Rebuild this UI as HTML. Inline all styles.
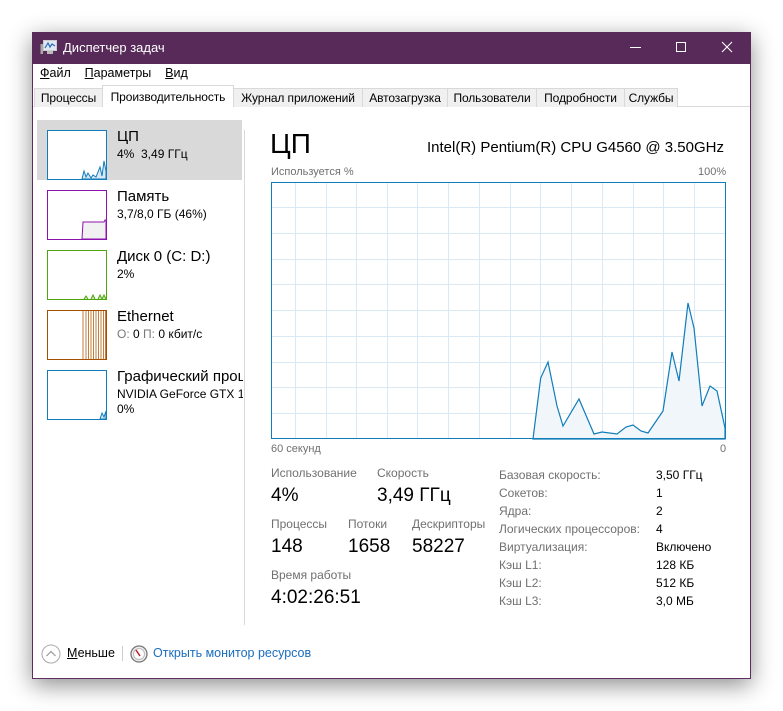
<!DOCTYPE html>
<html><head><meta charset="utf-8"><style>
*{margin:0;padding:0;box-sizing:border-box}
body{width:783px;height:711px;background:#fff;font-family:"Liberation Sans","DejaVu Sans",sans-serif;position:relative;overflow:hidden;color:#000}
.a{position:absolute;white-space:nowrap}
#win{position:absolute;left:32px;top:32px;width:719px;height:647px;border:1px solid #5c2d5e;background:#fff;box-shadow:0 6px 22px rgba(0,0,0,.45)}
.tab{position:absolute;top:88px;height:19px;border:1px solid #d9d9d9;border-bottom:none;background:#f0f0f0;font-size:12px;line-height:18px;text-align:center;letter-spacing:-0.1px}
.lbl{font-size:12px;color:#707070}
.big{font-size:19px;color:#000}
.k{font-size:12px;color:#707070}
.v{font-size:12px;color:#000}
.th{position:absolute;left:47px;width:60px;height:50px;background:#fff}
</style></head><body>
<div id="win"></div>
<div class="a" style="left:32px;top:32px;width:719px;height:32px;background:#582a5a"></div>
<svg class="a" style="left:40px;top:39px" width="18" height="17" viewBox="0 0 18 17"><rect x="0.5" y="5" width="2.5" height="10" fill="#aaa"/><rect x="3.5" y="1.5" width="13" height="10" fill="#dfe9f3" stroke="#ccc"/><polyline points="5,9 8,4 10,8 12,5 15,7" fill="none" stroke="#2a6ab5" stroke-width="1.2"/><rect x="7" y="12" width="6" height="3" fill="#bbb"/></svg>
<div class="a" style="left:63px;top:40px;font-size:13px;color:#fff">Диспетчер задач</div>
<div class="a" style="left:630px;top:47px;width:11px;height:1px;background:#fff"></div>
<div class="a" style="left:676px;top:42px;width:10px;height:10px;border:1px solid #fff"></div>
<svg class="a" style="left:721px;top:41px" width="12" height="12"><path d="M1 1L11 11M11 1L1 11" stroke="#fff" stroke-width="1.1"/></svg>
<div class="a" style="left:40px;top:66px;font-size:12.5px"><u>Ф</u>айл&nbsp;&nbsp;&nbsp;&nbsp;<u>П</u>араметры&nbsp;&nbsp;&nbsp;&nbsp;<u>В</u>ид</div>
<div class="a" style="left:33px;top:106px;width:717px;height:1px;background:#d9d9d9"></div>
<div class="tab" style="left:34px;width:69px">Процессы</div>
<div class="tab" style="left:102px;top:85px;height:22px;width:132px;background:#fff;line-height:22px">Производительность</div>
<div class="tab" style="left:233px;width:130px">Журнал приложений</div>
<div class="tab" style="left:362px;width:86px">Автозагрузка</div>
<div class="tab" style="left:447px;width:90px">Пользователи</div>
<div class="tab" style="left:536px;width:89px">Подробности</div>
<div class="tab" style="left:624px;width:54px">Службы</div>

<div class="a" style="left:37px;top:120px;width:205px;height:60px;background:#d9d9d9"></div>
<div class="a" style="left:244px;top:130px;width:1px;height:495px;background:#d9d9d9"></div>

<div class="th" style="top:130px;border:1px solid #117dbb"><svg width="58" height="48"><path d="M34 48L36 40L38 46L40 42L43 47L45 44L48 46L52 36L54 45L56 30L58 40L58 48Z" fill="#dbe8f3" stroke="#117dbb"/></svg></div>
<div class="a" style="left:117px;top:128px;font-size:15px">ЦП</div>
<div class="a" style="left:117px;top:147px;font-size:12px">4%&nbsp; 3,49 ГГц</div>

<div class="th" style="top:190px;border:1px solid #8b12ae"><svg width="58" height="48"><path d="M34 48L35 31L56 31L57 29L58 29L58 48Z" fill="#f1f1f1" stroke="#8b12ae"/></svg></div>
<div class="a" style="left:117px;top:188px;font-size:15px">Память</div>
<div class="a" style="left:117px;top:207px;font-size:12px">3,7/8,0 ГБ (46%)</div>

<div class="th" style="top:250px;border:1px solid #4da60c"><svg width="58" height="48"><path d="M36 48L38 45L40 48M43 48L45 44L47 48M50 48L52 44L54 48L56 44L58 48" fill="#cde6b8" stroke="#4da60c"/></svg></div>
<div class="a" style="left:117px;top:248px;font-size:15px">Диск 0 (C: D:)</div>
<div class="a" style="left:117px;top:267px;font-size:12px">2%</div>

<div class="th" style="top:310px;border:1px solid #a74f01"><svg width="58" height="48"><g stroke="#b35f0f" stroke-width="0.8"><path d="M35 0V48M38 0V48M40.5 0V48M43 0V48M45.5 0V48M48 0V48M50.5 0V48M53 0V48M55.5 0V48M57.5 0V48"/></g></svg></div>
<div class="a" style="left:117px;top:308px;font-size:15px">Ethernet</div>
<div class="a" style="left:117px;top:327px;font-size:12px"><span style="color:#777">О:</span> 0 <span style="color:#777">П:</span> 0 кбит/с</div>

<div class="th" style="top:370px;border:1px solid #117dbb"><svg width="58" height="48"><path d="M52 48L54 42L56 46L58 40L58 48Z" fill="#dbe8f3" stroke="#117dbb"/></svg></div>
<div class="a" style="left:117px;top:368px;font-size:15px;width:126px;overflow:hidden">Графический процессор</div>
<div class="a" style="left:117px;top:387px;font-size:12px;width:126px;overflow:hidden">NVIDIA GeForce GTX 1050</div>
<div class="a" style="left:117px;top:402px;font-size:12px">0%</div>

<div class="a" style="left:270px;top:128px;font-size:28px">ЦП</div>
<div class="a" style="left:427px;top:139px;font-size:15px">Intel(R) Pentium(R) CPU G4560 @ 3.50GHz</div>
<div class="a lbl" style="left:271px;top:166px;font-size:11px">Используется %</div>
<div class="a lbl" style="left:698px;top:166px;font-size:11px">100%</div>
<svg class="a" style="left:271px;top:182px" width="456" height="258" viewBox="271 182 456 258">
<g stroke="#d9eaf4" stroke-width="1">
<path d="M295.5 182V439M326.5 182V439M356.5 182V439M387.5 182V439M417.5 182V439M448.5 182V439M479.5 182V439M510.5 182V439M540.5 182V439M571.5 182V439M602.5 182V439M633.5 182V439M663.5 182V439M694.5 182V439"/>
<path d="M271 207.5H726M271 233.5H726M271 259.5H726M271 284.5H726M271 310.5H726M271 336.5H726M271 362.5H726M271 387.5H726M271 413.5H726"/>
</g>
<path d="M533 439L540.7 378L548 362L557 406L563 426L579 399L594 434L602 432L617 434L626 427L633 425L641 431L648 433L663 411L672 352L679 381L688 303L694 328L702 406L710 386L717 391L725 428L725 439Z" fill="#f1f6fa" stroke="#117dbb" stroke-width="1.2"/>
<rect x="271.5" y="182.5" width="454" height="256" fill="none" stroke="#117dbb"/>
</svg>
<div class="a lbl" style="left:271px;top:443px;font-size:11px">60 секунд</div>
<div class="a lbl" style="left:720px;top:443px;font-size:11px">0</div>

<div class="a lbl" style="left:271px;top:466px">Использование</div>
<div class="a lbl" style="left:377px;top:466px">Скорость</div>
<div class="a big" style="left:271px;top:485px">4%</div>
<div class="a big" style="left:377px;top:485px">3,49 ГГц</div>
<div class="a lbl" style="left:271px;top:517px">Процессы</div>
<div class="a lbl" style="left:348px;top:517px">Потоки</div>
<div class="a lbl" style="left:412px;top:517px">Дескрипторы</div>
<div class="a big" style="left:271px;top:536px">148</div>
<div class="a big" style="left:348px;top:536px">1658</div>
<div class="a big" style="left:412px;top:536px">58227</div>
<div class="a lbl" style="left:271px;top:568px">Время работы</div>
<div class="a big" style="left:271px;top:587px">4:02:26:51</div>

<div class="a k" style="left:499px;top:466px;line-height:18px">Базовая скорость:<br>Сокетов:<br>Ядра:<br>Логических процессоров:<br>Виртуализация:<br>Кэш L1:<br>Кэш L2:<br>Кэш L3:</div>
<div class="a v" style="left:656px;top:466px;line-height:18px">3,50 ГГц<br>1<br>2<br>4<br>Включено<br>128 КБ<br>512 КБ<br>3,0 МБ</div>

<svg class="a" style="left:41px;top:644px" width="20" height="20"><circle cx="10" cy="10" r="9" fill="#fff" stroke="#aaa"/><path d="M5.5 12L10 7.5L14.5 12" fill="none" stroke="#999" stroke-width="1.2"/></svg>
<div class="a" style="left:67px;top:646px;font-size:12.5px"><u>М</u>еньше</div>
<div class="a" style="left:122px;top:646px;width:1px;height:15px;background:#ccc"></div>
<svg class="a" style="left:130px;top:645px" width="18" height="18"><circle cx="9" cy="9" r="8" fill="#eee" stroke="#777" stroke-width="1.3"/><circle cx="9" cy="9" r="5.5" fill="#fff" stroke="#bbb"/><path d="M6 5L10 11" stroke="#c0202a" stroke-width="1.5"/></svg>
<div class="a" style="left:153px;top:646px;font-size:12.5px;color:#1a6dc0">Открыть монитор ресурсов</div>
</body></html>
